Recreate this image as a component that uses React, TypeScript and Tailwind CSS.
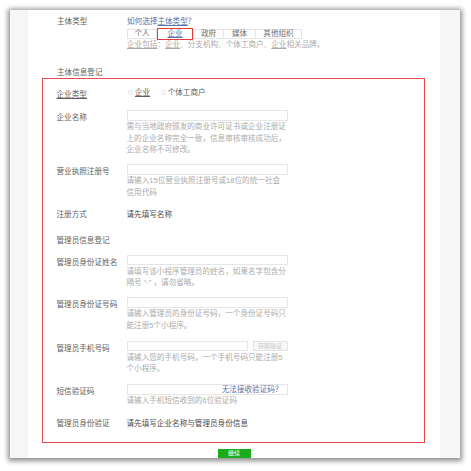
import React from "react";

const FONT = "font-['Liberation_Sans','Noto_Sans_CJK_SC',sans-serif]";

function Help({ lines }: { lines: React.ReactNode[] }) {
  return (
    <div className="mt-[0.5px] text-[#ababab] leading-[11.5px] whitespace-nowrap">
      {lines.map((l, i) => (
        <div key={i}>{l}</div>
      ))}
    </div>
  );
}

function InputRow({
  label,
  mt,
  help,
  short,
  extra,
}: {
  label: React.ReactNode;
  mt: string;
  help: React.ReactNode[];
  short?: boolean;
  extra?: React.ReactNode;
}) {
  return (
    <div className={`flex items-start ${mt}`}>
      <div className="w-[70px] shrink-0 mt-[2px] leading-[11px] text-[#5e5e5e] whitespace-nowrap">{label}</div>
      <div className="w-[161px]">
        <div className="flex items-center gap-[5px]">
          <div className={`${short ? "w-[121px]" : "w-[161px]"} h-[10.5px] border border-[#e6e6e6] bg-white relative`}>
            {extra}
          </div>
          {short && (
            <div className="w-[35px] h-[10px] border border-[#e3e3e3] bg-[#f7f7f7] text-[6px] leading-[8px] text-[#c8c8c8] text-center">
              获取验证
            </div>
          )}
        </div>
        <Help lines={help} />
      </div>
    </div>
  );
}

export default function App() {
  return (
    <div className={`w-[471px] h-[471px] bg-white pt-[10px] pl-[10px] text-[7.6px] ${FONT}`}>
      <div className="w-[450px] h-[448px] flex shadow-[0_1px_5px_2px_rgba(0,0,0,0.45)] overflow-hidden">
        <div className="w-[18px] bg-[#f5f6f8]" />
        <div className="w-[412px] bg-white">
          <div className="pl-[29px] pt-[6px]">
            <div className="flex leading-[11px]">
              <div className="w-[70px] text-[#5e5e5e]">主体类型</div>
              <div className="text-[#5a74a8]">
                如何选择<span className="underline">主体类型</span>？
              </div>
            </div>
            <div className="ml-[70px] mt-[1.5px] flex h-[10px] text-[#707070] leading-[8px] text-center">
              <div className="w-[30px] border border-[#e4e4e4]">个人</div>
              <div className="w-[36px] h-[12px] -mt-[1px] border-[1.5px] border-[#e23c3c] text-[#5a74a8] leading-[9px]">
                <span className="underline">企业</span>
              </div>
              <div className="w-[31px] border border-[#e4e4e4]">政府</div>
              <div className="w-[32px] border border-l-0 border-[#e4e4e4]">媒体</div>
              <div className="w-[46px] border border-l-0 border-[#e4e4e4]">其他组织</div>
            </div>
            <div className="ml-[70px] leading-[11px] text-[#ababab] whitespace-nowrap">
              <span className="underline">企业包括</span>：<span className="underline">企业</span>、分支机构、个体工商户、
              <span className="underline">企业</span>相关品牌。
            </div>
            <div className="mt-[17px] leading-[11px] text-[#5e5e5e]">主体信息登记</div>
          </div>

          <div className="ml-[14px] w-[383px] border-[1.5px] border-[#e8474c] pl-[13.5px] pb-[13px]">
            <div className="flex items-start">
              <div className="w-[70px] mt-[10px] leading-[11px] text-[#5e5e5e] underline">企业类型</div>
              <div className="mt-[8px] flex items-center leading-[11px] text-[#5e5e5e]">
                <span className="w-[5px] h-[5px] rounded-full border border-[#e2e2e2] ml-[1px]" />
                <span className="ml-[2.5px] underline">企业</span>
                <span className="w-[5px] h-[5px] rounded-full border border-[#e2e2e2] ml-[11px]" />
                <span className="ml-[1.5px]">个体工商户</span>
              </div>
            </div>

            <InputRow
              mt="mt-[10.5px]"
              label="企业名称"
              help={[
                "需与当地政府颁发的商业许可证书或企业注册证",
                "上的企业名称完全一致，信息审核审核成功后，",
                "企业名称不可修改。",
              ]}
            />
            <InputRow
              mt="mt-[8.5px]"
              label="营业执照注册号"
              help={["请输入15位营业执照注册号或18位的统一社会", "信用代码"]}
            />

            <div className="flex mt-[11px] leading-[11px]">
              <div className="w-[70px] text-[#5e5e5e]">注册方式</div>
              <div className="text-[#4a4a4a]">请先填写名称</div>
            </div>

            <div className="mt-[15px] leading-[11px] text-[#5e5e5e]">管理员信息登记</div>

            <InputRow
              mt="mt-[8.5px]"
              label="管理员身份证姓名"
              help={["请填写该小程序管理员的姓名，如果名字包含分", "隔号 “·” ，请勿省略。"]}
            />
            <InputRow
              mt="mt-[8.5px]"
              label="管理员身份证号码"
              help={["请输入管理员的身份证号码，一个身份证号码只", "能注册5个小程序。"]}
            />
            <InputRow
              mt="mt-[9.5px]"
              label="管理员手机号码"
              short
              help={["请输入您的手机号码，一个手机号码只能注册5", "个小程序。"]}
            />
            <InputRow
              mt="mt-[9.5px]"
              label="短信验证码"
              help={["请输入手机短信收到的6位验证码"]}
              extra={
                <span className="absolute right-[4px] top-[-1px] leading-[11px] text-[#5a74a8] whitespace-nowrap">
                  无法接收验证码？
                </span>
              }
            />

            <div className="flex mt-[11px] leading-[11px]">
              <div className="w-[70px] text-[#5e5e5e]">管理员身份验证</div>
              <div className="text-[#4a4a4a]">请先填写企业名称与管理员身份信息</div>
            </div>
          </div>

          <div className="mt-[6px] mx-auto w-[33px] h-[9px] bg-[#1aad19] text-white text-[6px] leading-[9px] text-center">
            继续
          </div>
        </div>
        <div className="w-[20px] bg-[#f5f6f8]" />
      </div>
    </div>
  );
}
